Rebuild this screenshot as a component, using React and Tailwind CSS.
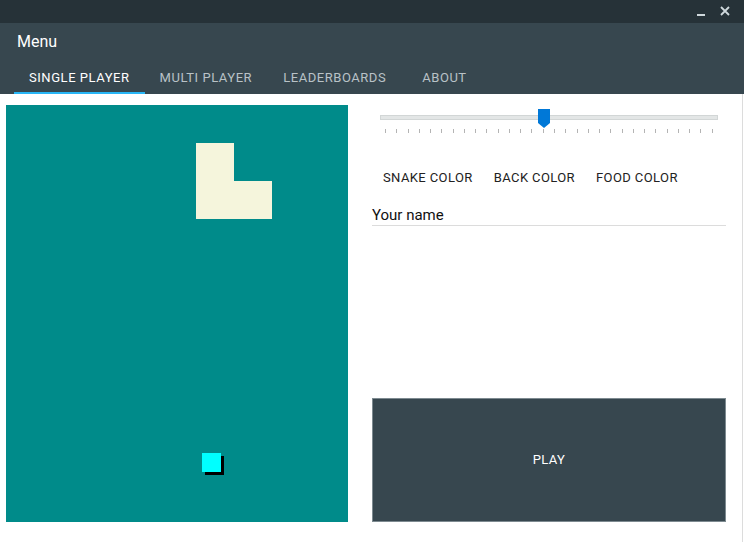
import React from "react";

const ticks = Array.from({ length: 30 }, (_, i) => i);

function Slider() {
  return (
    <div className="relative mx-[8px] mt-[10px] h-[24px]">
      <div className="h-[5px] bg-[#e3e6e6] border border-[#d2d6d6]" />
      <svg className="absolute left-[158px] top-[-6px]" width="12" height="19" viewBox="0 0 12 19">
        <path d="M0 0 H12 V14 L6 19 L0 14 Z" fill="#0078d7" />
      </svg>
      <div className="flex justify-between pl-[5px] pr-[5px] mt-[9px]">
        {ticks.map((t) => (
          <span key={t} className="w-px h-[4px] bg-[#b4b4b4]" />
        ))}
      </div>
    </div>
  );
}

export default function App() {
  return (
    <div
      className="w-[744px] h-[542px] flex flex-col bg-white overflow-hidden"
      style={{ fontFamily: "Roboto, 'Noto Sans', sans-serif" }}
    >
      {/* window bar */}
      <div className="h-[23px] bg-[#263238] flex items-center justify-end pr-[14px] gap-[15px]">
        <span className="w-[8px] h-[2px] bg-[#cfd8dc] mt-[6px]" />
        <svg width="10" height="10" viewBox="0 0 10 10" className="mt-[-2px]">
          <path d="M1 1 L9 9 M9 1 L1 9" stroke="#cfd8dc" strokeWidth="1.8" />
        </svg>
      </div>

      {/* header */}
      <div className="h-[71px] bg-[#37474f] flex flex-col">
        <div className="text-white text-[16px] pl-[17px] pt-[9px] leading-[20px]">Menu</div>
        <div className="flex mt-auto pl-[14px] text-[13px] tracking-[0.55px] leading-[16px]">
          <div className="h-[38px] px-[15px] pt-[14px] border-b-2 border-[#29b6f6] text-white">SINGLE PLAYER</div>
          <div className="h-[38px] px-[15px] pt-[14px] border-b-2 border-transparent text-[#b9c2c7]">MULTI PLAYER</div>
          <div className="h-[38px] pl-[16px] pr-[15px] pt-[14px] border-b-2 border-transparent text-[#b9c2c7]">LEADERBOARDS</div>
          <div className="h-[38px] pl-[21px] pr-[15px] pt-[14px] border-b-2 border-transparent text-[#b9c2c7]">ABOUT</div>
        </div>
      </div>

      {/* content */}
      <div className="flex-1 flex border-r border-[#dcdcdc] mr-[1px] pt-[11px] pl-[6px]">
        <div className="relative w-[342px] h-[417px] bg-[#008b8a]">
          <div className="absolute left-[190px] top-[38px] w-[38px] h-[38px] bg-[#f5f5dc]" />
          <div className="absolute left-[190px] top-[76px] w-[76px] h-[38px] bg-[#f5f5dc]" />
          <div className="absolute left-[199px] top-[351px] w-[19px] h-[19px] bg-black" />
          <div className="absolute left-[196px] top-[348px] w-[19px] h-[19px] bg-[#00ffff]" />
        </div>

        <div className="ml-[24px] w-[354px] flex flex-col">
          <Slider />
          <div className="flex text-[13px] text-[#222] tracking-[0.4px] mt-[30px] pl-[11px] gap-[21px] leading-[18px]">
            <span>SNAKE COLOR</span>
            <span>BACK COLOR</span>
            <span>FOOD COLOR</span>
          </div>
          <div className="mt-[19px] text-[15px] text-[#111] leading-[18px] pb-[1px] border-b border-[#dcdcdc]">
            Your name
          </div>
          <div className="mt-[172px] h-[124px] bg-[#37474f] border border-[#7d8a90] flex items-center justify-center text-white text-[13px] tracking-[0.4px]">
            PLAY
          </div>
        </div>
      </div>
    </div>
  );
}
